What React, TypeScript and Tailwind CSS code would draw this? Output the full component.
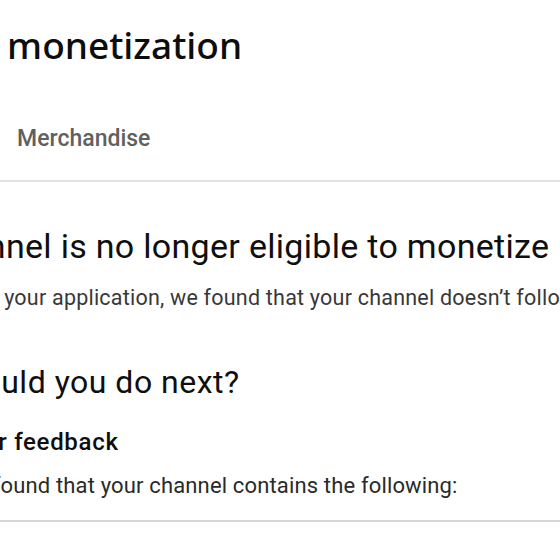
import React from "react";

export default function App() {
  return (
    <div className="w-[560px] h-[560px] overflow-hidden bg-white font-['Roboto',sans-serif]">
      <div className="pt-[23px]">
        <h1 className="whitespace-nowrap ml-[-148px] font-['Noto_Sans',sans-serif] text-[37px] leading-[44px] font-medium text-[#0d0d0d]">
          Channel monetization
        </h1>
        <div className="border-b-2 border-[#e3e3e3] pb-[25px]">
          <div className="mt-[56px] flex gap-[48px] ml-[-172px] whitespace-nowrap text-[23px] leading-[32px] font-medium text-[#606060]">
            <span>Memberships</span>
            <span>Merchandise</span>
          </div>
        </div>
        <h2 className="mt-[44px] whitespace-nowrap ml-[-148px] text-[34px] leading-[40px] tracking-[0.3px] font-normal text-[#0f0f0f]">
          Your channel is no longer eligible to monetize
        </h2>
        <p className="mt-[18px] whitespace-nowrap ml-[-148px] text-[21.5px] leading-[28px] tracking-[0.22px] text-[#383838]">
          After reviewing your application, we found that your channel doesn’t follow our policies.
        </p>
        <h3 className="mt-[52px] whitespace-nowrap ml-[-137px] text-[32px] leading-[36px] tracking-[0.5px] font-normal text-[#0f0f0f]">
          What should you do next?
        </h3>
        <h4 className="mt-[27px] whitespace-nowrap ml-[-33px] text-[24px] leading-[30px] tracking-[0.7px] font-medium text-[#0f0f0f]">
          Our feedback
        </h4>
        <p className="mt-[15px] whitespace-nowrap ml-[-44px] text-[22px] leading-[28px] tracking-[0.15px] text-[#2a2a2a]">
          We found that your channel contains the following:
        </p>
        <div className="mt-[20px] border-t-2 border-[#d6d6d6]" />
      </div>
    </div>
  );
}
